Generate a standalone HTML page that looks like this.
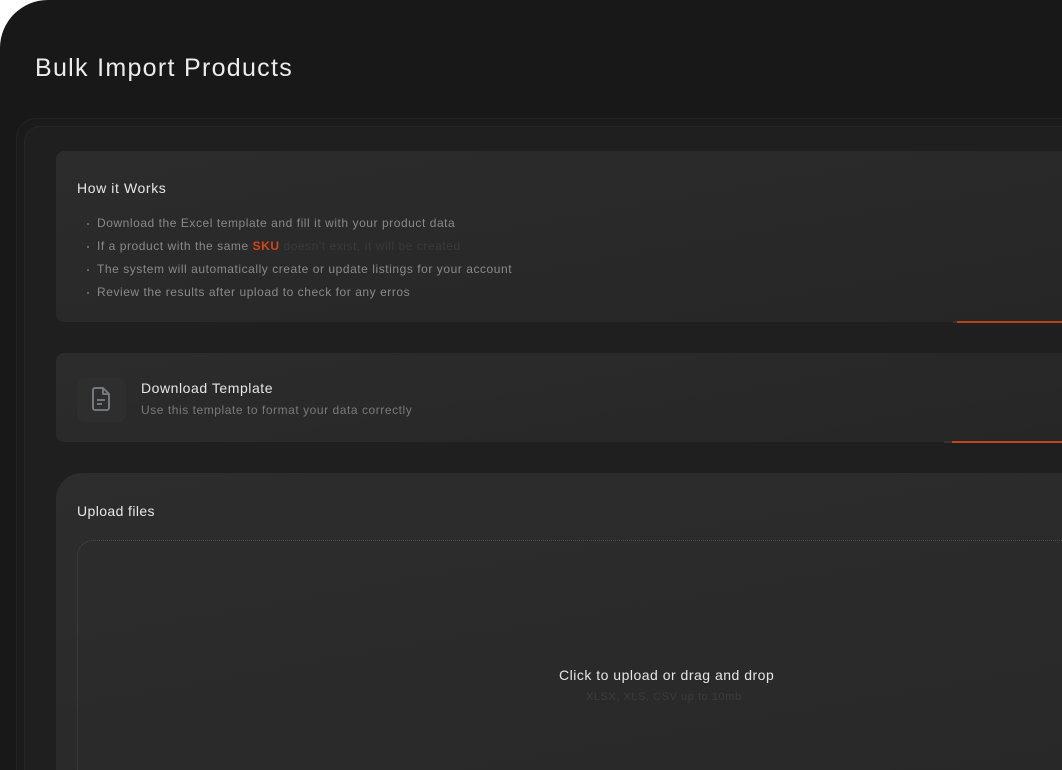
<!DOCTYPE html>
<html><head><meta charset="utf-8"><style>
*{margin:0;padding:0;box-sizing:border-box}
html,body{width:1062px;height:770px;overflow:hidden;background:#fff}
body{font-family:"Liberation Sans",sans-serif;position:relative;letter-spacing:0.5px}
.app{position:absolute;left:0;top:0;width:1062px;height:770px;background:#181818;border-top-left-radius:48px;overflow:hidden}
h1{position:absolute;left:35px;top:54px;font-size:25px;font-weight:400;color:#ececec;letter-spacing:1.3px}
.outer{position:absolute;left:16px;top:118px;width:1100px;height:700px;border-radius:20px;background:#1b1b1b;border:1px solid #242424}
.inner{position:absolute;left:24px;top:126px;width:1100px;height:700px;border-radius:16px;background:#1f1f1f;border:1px solid #262626}
.card{position:absolute;left:56px;width:1050px;background:linear-gradient(170deg,#2c2c2c,#262626);border-radius:8px}
.c1{top:151px;height:171px}
.c2{top:353px;height:89px}
.c3{top:473px;height:320px;border-top-left-radius:26px;background:linear-gradient(170deg,#2d2d2d,#282828)}
.t{position:absolute;color:#e6e6e6;font-size:14px;white-space:nowrap}
.li{position:absolute;left:97px;font-size:12px;color:#8a8a8a;white-space:nowrap;letter-spacing:0.55px}
.dot{position:absolute;left:87px;width:2px;height:2px;background:#666}
.line{position:absolute;height:2px}
.drop{position:absolute;left:77px;top:540px;width:1000px;height:260px;border:1px dotted #4a4a4a;border-radius:16px}
</style></head><body>
<div class="app">
<h1>Bulk Import Products</h1>
<div class="outer"></div>
<div class="inner"></div>
<div class="card c1"></div>
<div class="t" style="left:77px;top:180px;letter-spacing:0.6px">How it Works</div>
<div class="dot" style="top:223px"></div><div class="li" style="top:216px">Download the Excel template and fill it with your product data</div>
<div class="dot" style="top:246px"></div><div class="li" style="top:239px">If a product with the same <b style="color:#d2461a">SKU</b> <span style="color:#3a3a3a">doesn't exist, it will be created</span></div>
<div class="dot" style="top:269px"></div><div class="li" style="top:262px">The system will automatically create or update listings for your account</div>
<div class="dot" style="top:292px"></div><div class="li" style="top:285px">Review the results after upload to check for any erros</div>
<div class="line" style="left:953px;top:321px;width:109px;background:linear-gradient(90deg,#333,#333 4px,#b8431a 4px)"></div>
<div class="card c2"></div>
<div style="position:absolute;left:77px;top:378px;width:49px;height:44px;border-radius:8px;background:#2e2e2e"></div>
<svg style="position:absolute;left:91px;top:385px" width="22" height="28" viewBox="0 0 22 28" fill="none" stroke="#7a8184" stroke-width="1.8" stroke-linejoin="round"><path d="M4 3h8l6 6v14a2 2 0 0 1-2 2H4a2 2 0 0 1-2-2V5a2 2 0 0 1 2-2z"/><path d="M12 3v6h6"/><path d="M6 15h8M6 19h5"/></svg>
<div class="t" style="left:141px;top:380px;letter-spacing:0.55px">Download Template</div>
<div class="li" style="left:141px;top:403px;color:#7a7a7a">Use this template to format your data correctly</div>
<div class="line" style="left:944px;top:441px;width:118px;background:linear-gradient(90deg,#333,#333 8px,#c2451a 8px)"></div>
<div class="card c3"></div>
<div class="t" style="left:77px;top:503px;letter-spacing:0.4px">Upload files</div>
<div class="drop"></div>
<div class="t" style="left:559px;top:667px;letter-spacing:0.5px">Click to upload or drag and drop</div>
<div class="li" style="left:586px;top:691px;font-size:11px;color:#3c3c3c">XLSX, XLS, CSV up to 10mb</div>
</div>
</body></html>
